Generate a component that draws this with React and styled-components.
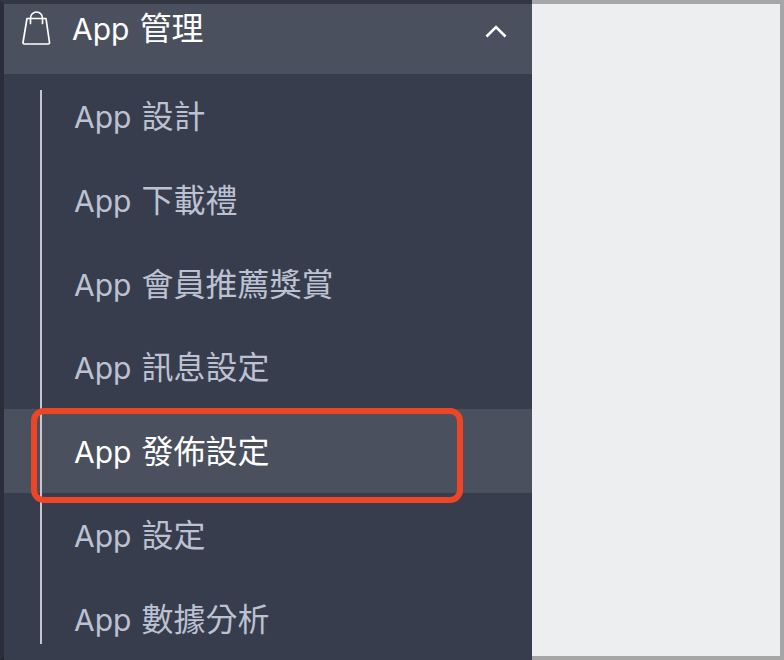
import styled, { createGlobalStyle } from 'styled-components'

const GlobalStyle = createGlobalStyle`
  html, body {
    margin: 0;
    padding: 0;
    background: #a6a6a6;
  }
  * {
    box-sizing: border-box;
  }
`

const Page = styled.div`
  width: 784px;
  height: 660px;
  display: flex;
  overflow: hidden;
  background: #a6a6a6;
  font-family: Inter, "Noto Sans CJK TC", sans-serif;
`

const Sidebar = styled.nav`
  position: relative;
  width: 532px;
  height: 660px;
  display: flex;
  flex-direction: column;
  border-top: 4px solid #333743;
  border-bottom: 4px solid #22252f;
  border-left: 4px solid #2b2e3a;
`

const Header = styled.div`
  height: 70px;
  flex-shrink: 0;
  display: flex;
  align-items: flex-start;
  padding: 6px 25px 0 18px;
  background: #4b505e;
  color: #fff;
`

const BagIcon = styled.svg`
  width: 30px;
  height: 36px;
  flex-shrink: 0;
  fill: none;
  stroke: #fff;
  stroke-width: 1.7;
  stroke-linejoin: round;
  stroke-linecap: round;
`

const HeaderLabel = styled.span`
  flex: 1;
  margin-left: 20px;
  font-size: 32px;
  line-height: 38px;
`

const Prefix = styled.span`
  font-size: 30px;
  margin-right: 1px;
`

const Chevron = styled.svg`
  width: 22px;
  height: 14px;
  margin-top: 14px;
  fill: none;
  stroke: #fff;
  stroke-width: 2.6;
`

const SubMenu = styled.ul`
  flex: 1;
  list-style: none;
  margin: 0;
  padding: 0;
  background: #383d4d;
`

const Item = styled.li`
  height: 83.8px;
  padding-left: 70px;
  font-size: 32px;
  line-height: 86px;
  color: ${(props) => (props.$active ? '#fff' : '#bcc2d2')};
  background: ${(props) => (props.$active ? '#4b505e' : 'transparent')};
`

const TreeLine = styled.div`
  position: absolute;
  left: 36px;
  top: 86px;
  width: 2px;
  height: 554px;
  background: #c4c8d2;
`

const Highlight = styled.div`
  position: absolute;
  left: 27px;
  top: 404px;
  width: 432px;
  height: 95px;
  border: 6px solid #ee4526;
  border-radius: 13px;
`

const Main = styled.main`
  flex: 1;
  margin: 4px 4px 4px 0;
  background: #edeef0;
`

const items = ['設計', '下載禮', '會員推薦獎賞', '訊息設定', '發佈設定', '設定', '數據分析']

function App() {
  return (
    <Page>
      <GlobalStyle />
      <Sidebar>
        <Header>
          <BagIcon viewBox="0 0 30 36">
            <path d="M5 8.500h19l3.500 24a1.300 1.300 0 0 1-1.300 1.500H2.300A1.300 1.300 0 0 1 1 32.500z" />
            <path d="M8.500 13.500V8a6 6 0 0 1 12 0v5.500" />
          </BagIcon>
          <HeaderLabel>
            <Prefix>App</Prefix> 管理
          </HeaderLabel>
          <Chevron viewBox="0 0 22 14">
            <path d="M1.500 12.500L11 3l9.500 9.500" />
          </Chevron>
        </Header>
        <SubMenu>
          {items.map((item) => (
            <Item key={item} $active={item === '發佈設定'}>
              <Prefix>App</Prefix> {item}
            </Item>
          ))}
        </SubMenu>
        <TreeLine />
        <Highlight />
      </Sidebar>
      <Main />
    </Page>
  )
}

export default App
